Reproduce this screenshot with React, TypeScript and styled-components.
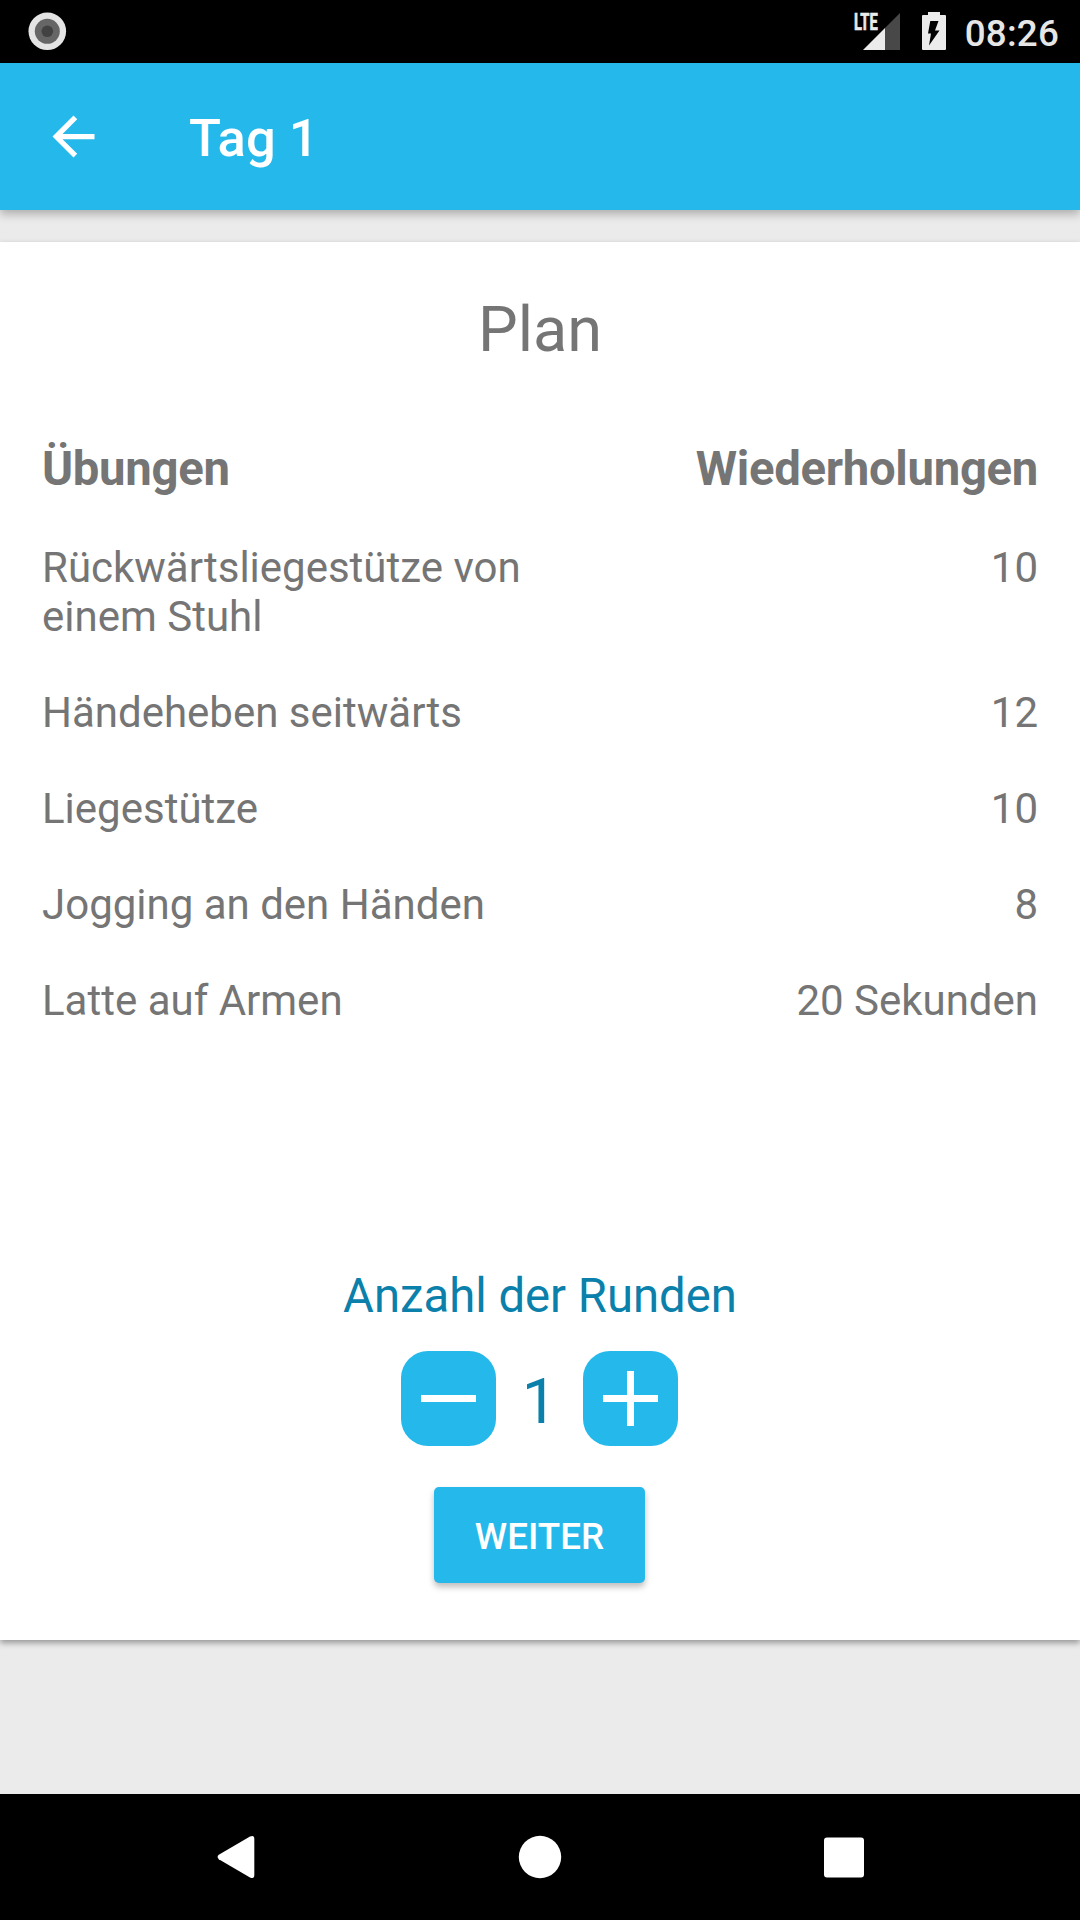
import React, { useState } from "react";
import styled, { createGlobalStyle } from "styled-components";

const blue = "#25b8eb";
const grey = "#757575";
const teal = "#0a80ab";

const GlobalStyle = createGlobalStyle`
  * { box-sizing: border-box; }
  body { margin: 0; background: #ebebeb; font-family: Roboto, "Noto Sans", sans-serif; }
  svg { display: block; flex: none; }
  button { border: 0; padding: 0; margin: 0; font-family: inherit; cursor: pointer; }
`;

const Screen = styled.div`
  display: flex;
  flex-direction: column;
  width: 1080px;
  height: 1920px;
  overflow: hidden;
  background: #ebebeb;
`;

const StatusBar = styled.header`
  display: flex;
  align-items: center;
  justify-content: space-between;
  height: 63px;
  padding: 0 21px 0 28px;
  background: #000;
`;

const StatusIcons = styled.div`
  display: flex;
  align-items: center;
  height: 63px;
`;

const Clock = styled.span`
  margin-left: 19px;
  padding-top: 3px;
  font-size: 36.75px;
  font-weight: 500;
  line-height: 43px;
  letter-spacing: 0.2px;
  color: #e6e6e6;
`;

const Network = styled.span`
  align-self: flex-start;
  width: 25px;
  margin-top: 10px;
  margin-right: -16px;
  font-size: 23px;
  font-weight: 700;
  line-height: 26px;
  color: #ebebeb;
  -webkit-text-stroke: 0.7px #ebebeb;
  transform: scaleX(0.64);
  transform-origin: 0 50%;
`;

const Toolbar = styled.div`
  position: relative;
  display: flex;
  align-items: center;
  height: 147px;
  padding-left: 42px;
  background: ${blue};
  box-shadow: 0 4px 9px rgba(0, 0, 0, 0.27);
`;

const IconButton = styled.button`
  background: none;
`;

const Title = styled.h1`
  margin: 2px 0 0 84px;
  font-size: 52.5px;
  font-weight: 500;
  line-height: 62px;
  color: #fff;
`;

const Content = styled.main`
  flex: 1;
  padding-top: 32px;
`;

const Card = styled.section`
  display: flex;
  flex-direction: column;
  align-items: center;
  height: 1398px;
  padding: 51px 42px 0;
  background: #fff;
  box-shadow: 0 3px 6px rgba(0, 0, 0, 0.36);
`;

const Heading = styled.h2`
  margin: 0 0 75px;
  font-size: 63px;
  font-weight: 400;
  line-height: 74px;
  color: ${grey};
`;

const Table = styled.div`
  display: flex;
  flex-direction: column;
  align-self: stretch;
  gap: 47px;
  color: ${grey};
`;

const Row = styled.div<{ $head?: boolean }>`
  display: grid;
  grid-template-columns: 1fr 1fr;
  font-size: ${(p) => (p.$head ? 47.25 : 42)}px;
  font-weight: ${(p) => (p.$head ? 700 : 400)};
  line-height: ${(p) => (p.$head ? 55 : 49)}px;
  letter-spacing: ${(p) => (p.$head ? "-0.3px" : "normal")};
  margin-bottom: ${(p) => (p.$head ? -1 : 0)}px;

  & > :last-child { text-align: right; }
`;

const RoundsLabel = styled.div`
  margin: 243px 0 27px;
  font-size: 47.25px;
  line-height: 56px;
  color: ${teal};
`;

const Stepper = styled.div`
  display: flex;
  align-items: center;
  margin: 0 1px 41px 0;
`;

const StepButton = styled.button`
  display: flex;
  align-items: center;
  justify-content: center;
  width: 95px;
  height: 95px;
  border-radius: 27px;
  background: ${blue};
`;

const Count = styled.span`
  width: 87px;
  padding-top: 6px;
  font-size: 63px;
  line-height: 74px;
  text-align: center;
  color: ${teal};
`;

const NextButton = styled.button`
  width: 211px;
  height: 96px;
  margin-right: 1px;
  padding-top: 2px;
  border-radius: 5px;
  background: ${blue};
  color: #fff;
  font-size: 36.75px;
  font-weight: 500;
  line-height: 43px;
  box-shadow: 0 4px 6px rgba(0, 0, 0, 0.26);
`;

const NavBar = styled.nav`
  display: flex;
  align-items: center;
  justify-content: space-between;
  height: 126px;
  padding: 0 215px 0 217px;
  background: #000;
`;

const exercises: [string, string][] = [
  ["Rückwärtsliegestütze von einem Stuhl", "10"],
  ["Händeheben seitwärts", "12"],
  ["Liegestütze", "10"],
  ["Jogging an den Händen", "8"],
  ["Latte auf Armen", "20 Sekunden"],
];

export default function App() {
  const [rounds, setRounds] = useState(1);
  return (
    <Screen>
      <GlobalStyle />
      <StatusBar>
        <svg width="39" height="63" viewBox="0 0 39 63">
          <circle cx="19.3" cy="31.3" r="18.8" fill="#e4e4e4" />
          <circle cx="19.3" cy="31.3" r="12.5" fill="#666" />
          <circle cx="19.3" cy="31.3" r="5.8" fill="#424242" />
        </svg>
        <StatusIcons>
          <Network>LTE</Network>
          <svg width="37" height="63" viewBox="0 0 37 63">
            <path d="M22 28L37 13V50H22Z" fill="#484848" />
            <path d="M0 50L22 28V50Z" fill="#ebebeb" />
          </svg>
          <svg width="46" height="63" viewBox="0 0 46 63">
            <path
              fillRule="evenodd"
              fill="#ebebeb"
              d="M28 12H40V15H45Q46 15 46 16V49Q46 50 45 50H23Q22 50 22 49V16Q22 15 23 15H28ZM30.300 21L28 33.500H31L29 45.500L39.500 30.500H35L38.500 21Z"
            />
          </svg>
          <Clock>08:26</Clock>
        </StatusIcons>
      </StatusBar>
      <Toolbar>
        <IconButton aria-label="Zurück">
          <svg width="63" height="63" viewBox="0 0 24 24" fill="#fff">
            <path d="M20 11H7.830l5.590-5.590L12 4l-8 8 8 8 1.410-1.410L7.830 13H20v-2z" />
          </svg>
        </IconButton>
        <Title>Tag 1</Title>
      </Toolbar>
      <Content>
        <Card>
          <Heading>Plan</Heading>
          <Table>
            <Row $head>
              <span>Übungen</span>
              <span>Wiederholungen</span>
            </Row>
            {exercises.map(([name, amount]) => (
              <Row key={name}>
                <span>{name}</span>
                <span>{amount}</span>
              </Row>
            ))}
          </Table>
          <RoundsLabel>Anzahl der Runden</RoundsLabel>
          <Stepper>
            <StepButton aria-label="Weniger" onClick={() => setRounds(Math.max(1, rounds - 1))}>
              <svg width="55" height="55" viewBox="0 0 55 55">
                <path d="M0 24H55V31H0Z" fill="#fff" />
              </svg>
            </StepButton>
            <Count>{rounds}</Count>
            <StepButton aria-label="Mehr" onClick={() => setRounds(rounds + 1)}>
              <svg width="55" height="55" viewBox="0 0 55 55">
                <path d="M0 24H24V0H31V24H55V31H31V55H24V31H0Z" fill="#fff" />
              </svg>
            </StepButton>
          </Stepper>
          <NextButton>WEITER</NextButton>
        </Card>
      </Content>
      <NavBar>
        <svg width="38" height="44" viewBox="0 0 38 44">
          <path d="M1.800 19.800L33 1.600Q37.300 -.400 37.300 4V40Q37.300 44.400 33 42.400L1.800 24.200Q-.600 22 1.800 19.800Z" fill="#fff" />
        </svg>
        <svg width="44" height="44" viewBox="0 0 44 44">
          <circle cx="22" cy="22" r="21.200" fill="#fff" />
        </svg>
        <svg width="41" height="41" viewBox="0 0 41 41">
          <rect x="0" y=".5" width="40" height="40" rx="3" fill="#fff" />
        </svg>
      </NavBar>
    </Screen>
  );
}
